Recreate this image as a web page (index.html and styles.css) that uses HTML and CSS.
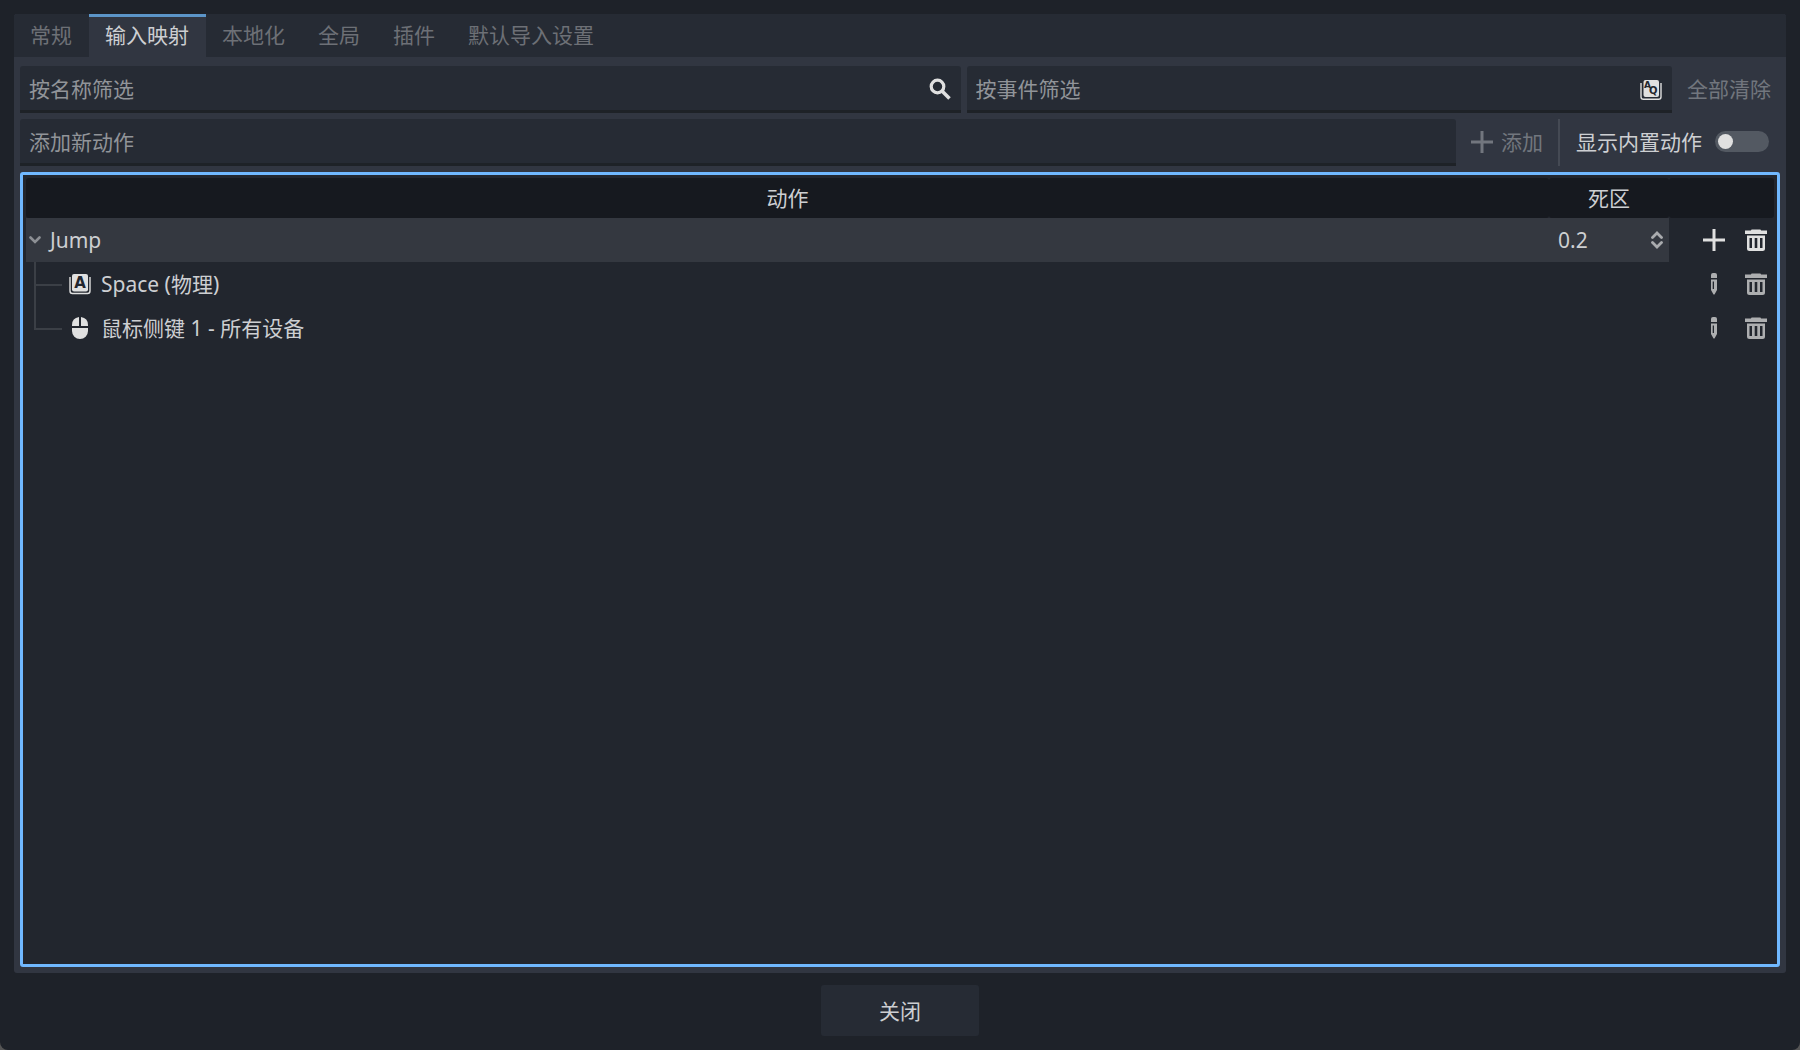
FILE: index.html
```html
<!DOCTYPE html>
<html lang="zh-CN">

<head>
    <meta charset="UTF-8">
    <meta name="viewport" content="width=device-width, initial-scale=1.0">
    <title>项目设置</title>
    <link rel="stylesheet" href="styles.css">
</head>

<body>
    <!-- shared icons -->
    <svg class="sprite" aria-hidden="true">
        <symbol id="icon-add" viewBox="0 0 22 22">
            <path d="M11 0v22M0 11h22" fill="none" stroke="currentColor" stroke-width="3"/>
        </symbol>
        <symbol id="icon-remove" viewBox="0 0 22 22">
            <path d="M6 1.500Q6 .5 7 .5H15Q16 .5 16 1.500H22V5H0V1.500z" fill="currentColor"/>
            <path fill-rule="evenodd" fill="currentColor" d="M2 6.500H20V19.500Q20 22 17.500 22H4.500Q2 22 2 19.500zM4.500 9v10h2.500V9zM9.700 9v10h2.600V9zM15 9v10h2.500V9z"/>
        </symbol>
        <symbol id="icon-edit" viewBox="0 0 22 22">
            <path d="M8 5V2Q8 0 10 0H12Q14 0 14 2V5z" fill="currentColor"/>
            <path fill-rule="evenodd" d="M8 6.500H14V17L11.500 21.500H10.500L8 17zM9.700 8.500V16H11V8.500z" fill="currentColor"/>
        </symbol>
    </svg>

    <main class="panel">
        <nav class="tabs">
            <button type="button" class="tab">常规</button>
            <button type="button" class="tab active">输入映射</button>
            <button type="button" class="tab">本地化</button>
            <button type="button" class="tab">全局</button>
            <button type="button" class="tab">插件</button>
            <button type="button" class="tab">默认导入设置</button>
        </nav>

        <div class="content">
            <div class="row">
                <label class="field name-filter">
                    <input type="text" placeholder="按名称筛选" aria-label="按名称筛选">
                    <svg class="icon" viewBox="0 0 22 22">
                        <circle cx="8.500" cy="8.500" r="6.300" fill="none" stroke="currentColor" stroke-width="3.200"/>
                        <path d="M13 13l7.500 7.500" stroke="currentColor" stroke-width="3.600"/>
                    </svg>
                </label>
                <label class="field event-filter">
                    <input type="text" placeholder="按事件筛选" aria-label="按事件筛选">
                    <svg class="icon" viewBox="0 0 22 22">
                        <path d="M1 5V19Q1 21.300 3.500 21.300H18.500Q21 21.300 21 19V5" fill="none" stroke="currentColor" stroke-width="1.400"/>
                        <rect x="3.500" y="2" width="15.500" height="17" rx="2" fill="currentColor"/>
                        <text class="key" x="4" y="10" font-size="9">A</text>
                        <text class="key" x="9" y="16" font-size="10">Q</text>
                    </svg>
                </label>
                <button type="button" class="flat" disabled>全部清除</button>
            </div>

            <div class="row">
                <label class="field">
                    <input type="text" placeholder="添加新动作" aria-label="添加新动作">
                </label>
                <button type="button" class="flat" disabled>
                    <svg class="icon"><use href="#icon-add"/></svg>
                    <span>添加</span>
                </button>
                <div class="separator"></div>
                <label class="toggle">
                    <span>显示内置动作</span>
                    <input type="checkbox">
                </label>
            </div>

            <div class="tree">
                <table>
                    <thead>
                        <tr>
                            <th>动作</th>
                            <th class="deadzone">死区</th>
                            <th class="actions" aria-label="操作"></th>
                        </tr>
                    </thead>
                    <tbody>
                        <tr class="action">
                            <td>
                                <div class="cell">
                                    <svg class="arrow" viewBox="0 0 12 8"><path d="M1.500 1.500L6 6l4.500-4.500" fill="none" stroke="currentColor" stroke-width="2.600" stroke-linecap="round"/></svg>
                                    Jump
                                </div>
                            </td>
                            <td>
                                <div class="cell spin">
                                    <input type="text" value="0.2" aria-label="死区">
                                    <button type="button" aria-label="调整死区">
                                        <svg class="updown" viewBox="0 0 12 18"><path d="M1.500 6.500L6 2l4.500 4.500M1.500 11.500L6 16l4.500-4.500" fill="none" stroke="currentColor" stroke-width="2.800" stroke-linecap="round"/></svg>
                                    </button>
                                </div>
                            </td>
                            <td>
                                <div class="cell buttons">
                                    <button type="button" aria-label="添加事件"><svg class="icon"><use href="#icon-add"/></svg></button>
                                    <button type="button" aria-label="移除动作"><svg class="icon"><use href="#icon-remove"/></svg></button>
                                </div>
                            </td>
                        </tr>
                        <tr class="event">
                            <td colspan="2">
                                <div class="cell">
                                    <span class="guide"></span>
                                    <svg class="icon" viewBox="0 0 22 22">
                                        <path d="M1 4V18Q1 20.500 3.500 20.500H18.500Q21 20.500 21 18V4" fill="none" stroke="currentColor" stroke-width="1.400"/>
                                        <rect x="3" y="1" width="16" height="17.500" rx="2" fill="currentColor"/>
                                        <text class="key" x="11" y="15" font-size="15" text-anchor="middle">A</text>
                                    </svg>
                                    Space (物理)
                                </div>
                            </td>
                            <td>
                                <div class="cell buttons">
                                    <button type="button" aria-label="编辑事件"><svg class="icon"><use href="#icon-edit"/></svg></button>
                                    <button type="button" aria-label="移除事件"><svg class="icon"><use href="#icon-remove"/></svg></button>
                                </div>
                            </td>
                        </tr>
                        <tr class="event">
                            <td colspan="2">
                                <div class="cell">
                                    <span class="guide"></span>
                                    <svg class="icon" viewBox="0 0 22 22">
                                        <path d="M10 0V9H3V8Q3 1 10 0zM12 0V9H19V8Q19 1 12 0zM3 11H19V14A8 8 0 0 1 3 14z" fill="currentColor"/>
                                    </svg>
                                    鼠标侧键 1 - 所有设备
                                </div>
                            </td>
                            <td>
                                <div class="cell buttons">
                                    <button type="button" aria-label="编辑事件"><svg class="icon"><use href="#icon-edit"/></svg></button>
                                    <button type="button" aria-label="移除事件"><svg class="icon"><use href="#icon-remove"/></svg></button>
                                </div>
                            </td>
                        </tr>
                    </tbody>
                </table>
            </div>
        </div>
    </main>

    <button type="button" class="close">关闭</button>
</body>

</html>
```

FILE: styles.css
```css
* {
    box-sizing: border-box;
}

html {
    background-color: #555555;
}

body {
    display: flex;
    flex-direction: column;
    gap: 12px;
    min-height: 100vh;
    margin: 0;
    padding: 14px;
    border-radius: 0 0 8px 8px;
    background-color: #1e2229;
    color: #cdcfd2;
    font-family: "Noto Sans", "Noto Sans CJK SC", sans-serif;
    font-size: 21px;
    line-height: 28px;
}

button,
input {
    margin: 0;
    padding: 0;
    border: none;
    background: none;
    color: inherit;
    font: inherit;
}

button {
    cursor: pointer;
}

svg {
    display: block;
    flex: none;
}

.sprite {
    position: absolute;
    width: 0;
    height: 0;
}

.icon {
    width: 22px;
    height: 22px;
    color: #e0e0e0;
    overflow: visible;
}

.key {
    fill: #22262e;
    font-family: "DejaVu Sans", sans-serif;
    font-weight: bold;
}

.panel {
    flex: 1;
    display: flex;
    flex-direction: column;
    border-radius: 3px;
    background-color: #313641;
    overflow: hidden;
}

/* tabs */
.tabs {
    display: flex;
    height: 43px;
    background-color: #262b34;
}

.tab {
    padding: 0 17px 2px 16px;
    border-top: 3px solid transparent;
    border-bottom: 3px solid transparent;
    color: #6d7076;
}

.tab.active {
    border-top-color: #5c95c8;
    background-color: #313641;
    color: #cdcfd2;
}

.content {
    flex: 1;
    display: flex;
    flex-direction: column;
    gap: 6px;
    padding: 9px 6px 6px;
}

/* filters */
.row {
    display: flex;
    gap: 6px;
    height: 47px;
}

.field {
    flex: 1;
    display: flex;
    align-items: center;
    min-width: 0;
    padding-top: 2px;
    border-bottom: 3px solid #1e2227;
    border-radius: 3px 3px 0 0;
    background-color: #262b34;
}

.field input {
    flex: 1;
    min-width: 0;
    padding-left: 9px;
    outline: none;
}

.field input::placeholder {
    color: #919499;
    opacity: 1;
}

.field .icon {
    margin-right: 10px;
}

.name-filter {
    flex: 4;
}

.event-filter {
    flex: 3;
}

.flat {
    display: flex;
    align-items: center;
    gap: 8px;
    padding: 0 9px 2px;
    color: #72767e;
}

.flat .icon {
    color: inherit;
}

.separator {
    width: 2px;
    background-color: #454a54;
}

.toggle {
    display: flex;
    align-items: center;
    gap: 13px;
    padding: 0 11px 2px 10px;
}

.toggle input {
    display: flex;
    align-items: center;
    width: 54px;
    height: 21px;
    padding: 0 3px;
    border-radius: 11px;
    background-color: #535962;
    appearance: none;
}

.toggle input::before {
    content: "";
    width: 15px;
    height: 15px;
    border-radius: 50%;
    background-color: #e0e0e0;
}

.toggle input:checked {
    justify-content: flex-end;
    background-color: #70b8ff;
}

/* action list */
.tree {
    flex: 1;
    padding: 3px;
    border: 3px solid #70b8ff;
    border-radius: 3px;
    background-color: #22262e;
}

table {
    width: 100%;
    border-collapse: collapse;
    table-layout: fixed;
}

th {
    height: 40px;
    padding: 0;
    border-radius: 3px;
    background-color: #16191f;
    font-weight: normal;
}

.deadzone {
    width: 120px;
}

.actions {
    width: 105px;
}

td {
    padding: 0;
}

.cell {
    display: flex;
    align-items: center;
    height: 44px;
}

.action td:not(:last-child) {
    background-color: #343840;
}

.arrow {
    width: 12px;
    height: 8px;
    margin: 0 9px 0 3px;
    color: #8c8f94;
}

.spin {
    padding: 0 6px 0 9px;
}

.spin input {
    flex: 1;
    min-width: 0;
}

.updown {
    width: 12px;
    height: 18px;
    color: #a9abae;
}

.buttons {
    justify-content: flex-end;
    gap: 20px;
    padding-right: 7px;
}

.event .buttons .icon {
    color: #adaeb0;
}

.event .cell > .icon {
    margin: 0 10px 0 7px;
}

.guide {
    width: 28px;
    height: 44px;
    margin-left: 8px;
}

.guide::before,
.guide::after {
    content: "";
    display: block;
    height: 22px;
    border-left: 2px solid #3b3f46;
}

.guide::before {
    border-bottom: 2px solid #3b3f46;
}

.event:last-child .guide::after {
    display: none;
}

.close {
    align-self: center;
    width: 158px;
    height: 51px;
    border-radius: 3px;
    background-color: #262b34;
}
```
